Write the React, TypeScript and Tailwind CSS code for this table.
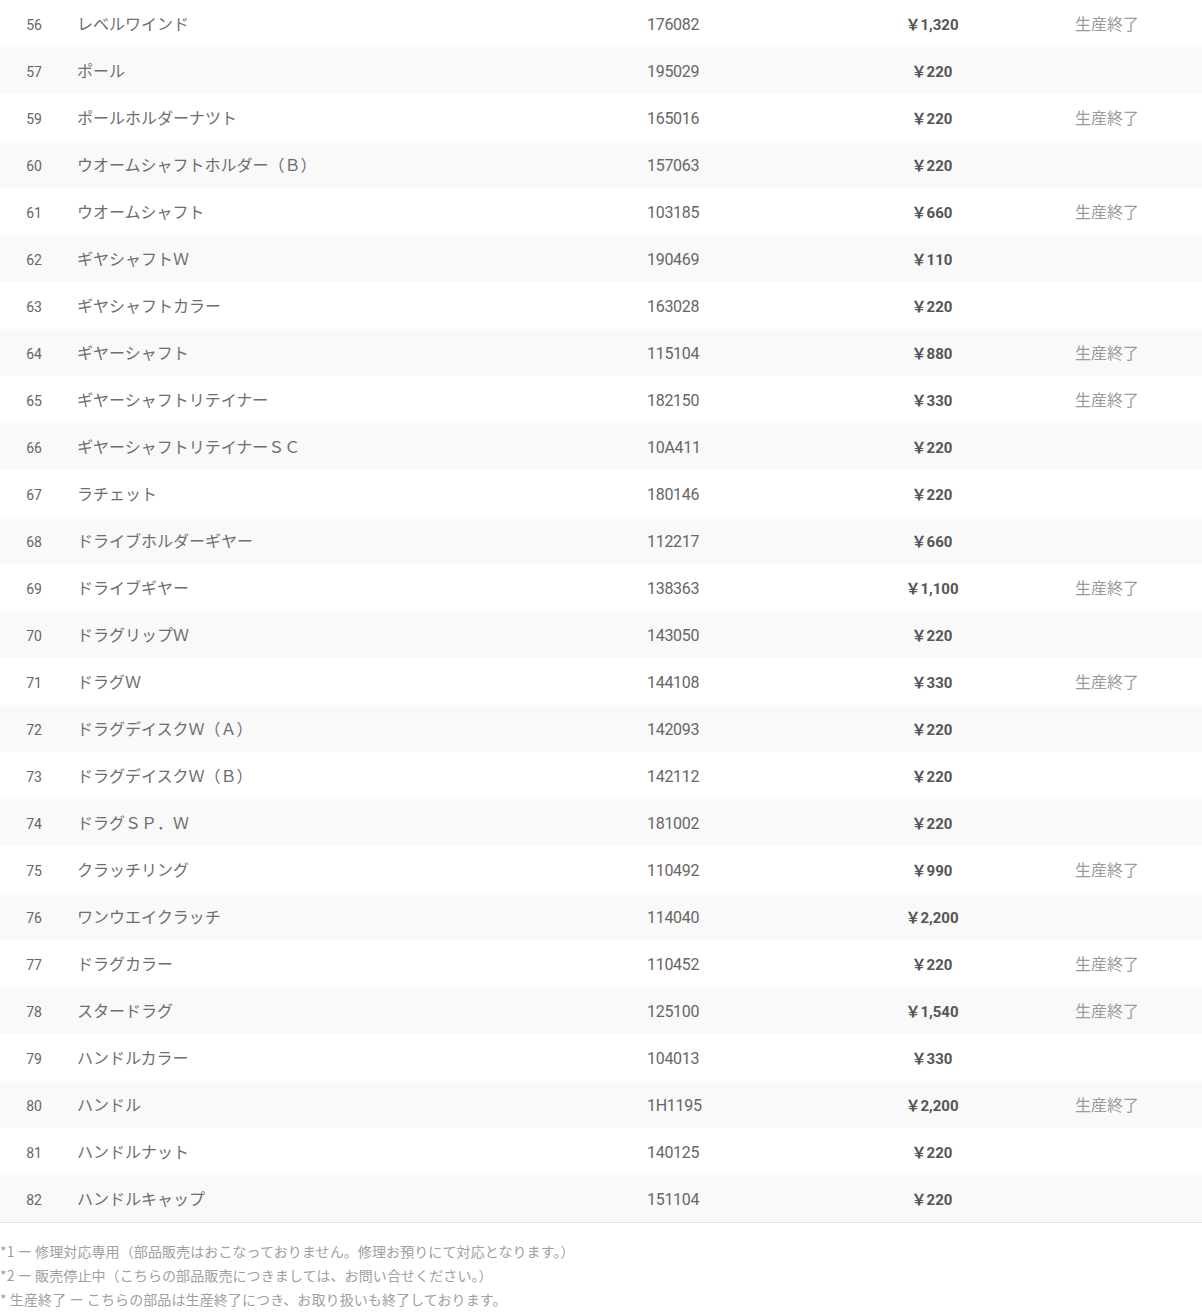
// App.tsx
const rows: [string, string, string, string, boolean][] = [
  ["56", "レベルワインド", "176082", "1,320", true],
  ["57", "ポール", "195029", "220", false],
  ["59", "ポールホルダーナツト", "165016", "220", true],
  ["60", "ウオームシャフトホルダー（Ｂ）", "157063", "220", false],
  ["61", "ウオームシャフト", "103185", "660", true],
  ["62", "ギヤシャフトＷ", "190469", "110", false],
  ["63", "ギヤシャフトカラー", "163028", "220", false],
  ["64", "ギヤーシャフト", "115104", "880", true],
  ["65", "ギヤーシャフトリテイナー", "182150", "330", true],
  ["66", "ギヤーシャフトリテイナーＳＣ", "10A411", "220", false],
  ["67", "ラチェット", "180146", "220", false],
  ["68", "ドライブホルダーギヤー", "112217", "660", false],
  ["69", "ドライブギヤー", "138363", "1,100", true],
  ["70", "ドラグリップＷ", "143050", "220", false],
  ["71", "ドラグＷ", "144108", "330", true],
  ["72", "ドラグデイスクＷ（Ａ）", "142093", "220", false],
  ["73", "ドラグデイスクＷ（Ｂ）", "142112", "220", false],
  ["74", "ドラグＳＰ．Ｗ", "181002", "220", false],
  ["75", "クラッチリング", "110492", "990", true],
  ["76", "ワンウエイクラッチ", "114040", "2,200", false],
  ["77", "ドラグカラー", "110452", "220", true],
  ["78", "スタードラグ", "125100", "1,540", true],
  ["79", "ハンドルカラー", "104013", "330", false],
  ["80", "ハンドル", "1H1195", "2,200", true],
  ["81", "ハンドルナット", "140125", "220", false],
  ["82", "ハンドルキャップ", "151104", "220", false],
];

const jp = "font-['Noto_Sans_CJK_JP',sans-serif]";
const num = "font-['Roboto','Noto_Sans_CJK_JP',sans-serif]";

export default function App() {
  return (
    <div className="w-[1202px] bg-white">
      <div className="border-b border-[#e6e6e6]">
        {rows.map(([no, name, code, price, ended], i) => (
          <div
            key={no}
            className={`flex h-[47px] items-center leading-none ${i % 2 === 1 ? "bg-[#f9f9f9]" : "bg-white"}`}
          >
            <div className={`w-[68px] pt-[2px] text-center text-[14px] text-[#666] ${num}`}>{no}</div>
            <div className={`w-[579px] pl-[9px] pb-[2px] text-[16px] text-[#6e6e6e] ${jp}`}>{name}</div>
            <div className={`w-[200px] pt-[2px] text-[16px] text-[#666] tracking-[-0.3px] ${num}`}>{code}</div>
            <div className={`w-[170px] pt-[2px] text-center text-[15px] font-bold text-[#555] ${num}`}>
              <span className={jp}>￥</span>
              {price}
            </div>
            <div className={`pl-[58px] pb-[2px] text-[16px] text-[#9a9a9a] ${jp}`}>
              {ended ? "生産終了" : ""}
            </div>
          </div>
        ))}
      </div>
      <div className={`pt-[16px] text-[14px] leading-[24px] text-[#a0a0a0] tracking-[0.1px] ${jp}`}>
        <p>*1 ー 修理対応専用（部品販売はおこなっておりません。修理お預りにて対応となります。）</p>
        <p>*2 ー 販売停止中（こちらの部品販売につきましては、お問い合せください。）</p>
        <p>* 生産終了 ー こちらの部品は生産終了につき、お取り扱いも終了しております。</p>
      </div>
    </div>
  );
}
